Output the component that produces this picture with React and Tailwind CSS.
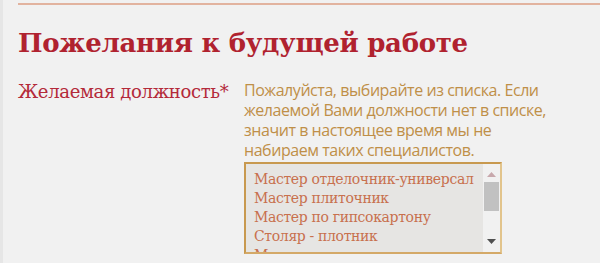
import React from 'react';

const OPTIONS = [
  'Мастер отделочник-универсал',
  'Мастер плиточник',
  'Мастер по гипсокартону',
  'Столяр - плотник',
  'Маляр',
];

const slab = { fontFamily: '"DejaVu Serif", "Liberation Serif", serif' };
const sans = { fontFamily: '"Open Sans", "Noto Sans", sans-serif' };

export default function App() {
  return (
    <div className="w-[600px] h-[263px] bg-[#f1f1f1] overflow-hidden flex">
      <div className="w-[3px] bg-[#e6e6e6]" />
      <div className="flex-1 pl-[15px] pt-[3px]">
        <div className="h-[2px] bg-[#e2b39f]" />
        <h2 className="mt-[21px] text-[26px] leading-[34px] font-bold text-[#b0222f] tracking-[-0.3px]" style={slab}>
          Пожелания к будущей работе
        </h2>
        <div className="mt-[20px] flex">
          <div className="w-[226px] text-[18px] leading-[24px] text-[#b42a3a] tracking-[-0.35px]" style={slab}>
            Желаемая должность*
          </div>
          <div className="flex flex-col">
            <p className="whitespace-nowrap text-[16px] leading-[20px] font-medium text-[#bf8f48] tracking-[-0.45px]" style={sans}>
              Пожалуйста, выбирайте из списка. Если
              <br />
              желаемой Вами должности нет в списке,
              <br />
              значит в настоящее время мы не
              <br />
              набираем таких специалистов.
            </p>
            <div className="mt-[2px] w-[258px] h-[92px] flex border-2 border-t-[#c8994f] border-l-[#c8994f] border-r-[#e2c48c] border-b-[#d4a968] bg-[#e6e5e3]">
              <div className="flex-1 overflow-hidden pl-[8px] pt-[6px] text-[14px] leading-[19px] text-[#c8704e] tracking-[-0.35px]" style={slab}>
                {OPTIONS.map((o) => (
                  <div key={o} className="whitespace-nowrap">{o}</div>
                ))}
              </div>
              <div className="w-[17px] bg-[#f1f1f1] flex flex-col items-center">
                <svg width="9" height="5" viewBox="0 0 9 5" className="mt-[8px]">
                  <path d="M0 5 L4.5 0 L9 5 Z" fill="#c8a8ac" />
                </svg>
                <div className="mt-[5px] w-[15px] h-[29px] bg-[#c1c1c1]" />
                <div className="flex-1" />
                <svg width="9" height="5" viewBox="0 0 9 5" className="mb-[8px]">
                  <path d="M0 0 L9 0 L4.5 5 Z" fill="#505050" />
                </svg>
              </div>
            </div>
          </div>
        </div>
      </div>
    </div>
  );
}
